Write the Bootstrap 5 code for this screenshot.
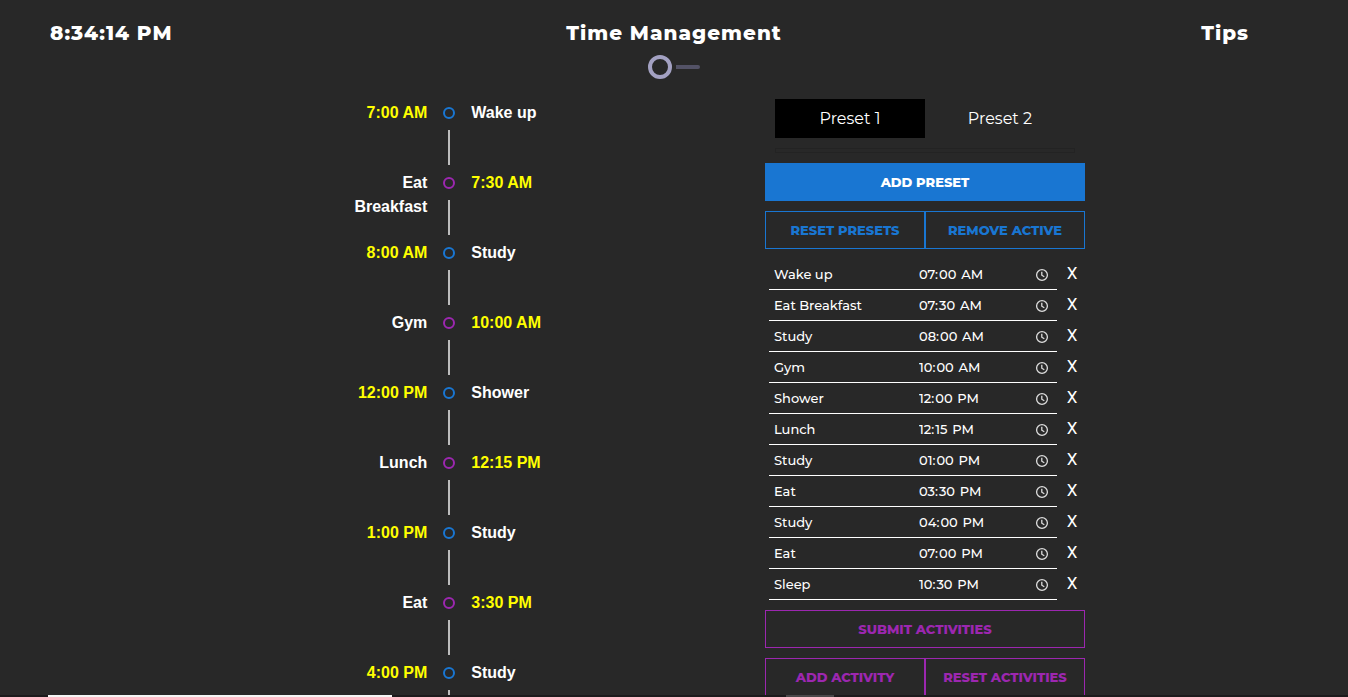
<!DOCTYPE html>
<html lang="en">
<head>
<meta charset="utf-8">
<meta name="viewport" content="width=device-width, initial-scale=1">
<title>Time Management</title>
<link href="https://cdn.jsdelivr.net/npm/bootstrap@5.3.0/dist/css/bootstrap.min.css" rel="stylesheet">
<style>
  :root { --blue: #1976d2; --violet: #9c27b0; }
  body { background: #282828; color: #fff; font-family: Montserrat, Inter, sans-serif; }
  .topbar { display: grid; grid-template-columns: 1fr auto 1fr; padding-top: 18px; font-size: 20px; line-height: 30px; font-weight: 800; letter-spacing: 1px; }
  .topbar h1 { font: inherit; }
  .clock { padding-left: 50px; }
  .tips { padding-right: 99px; }
  .mode { appearance: none; display: flex; align-items: center; gap: 4px; margin: 7px 0 0; cursor: pointer; }
  .mode::before { content: ""; width: 24px; height: 24px; border: 4px solid #a3a1c2; border-radius: 50%; }
  .mode::after { content: ""; width: 24px; height: 4px; background: #535266; border-radius: 0 2px 2px 0; }

  .timeline { width: 224px; padding-top: 16px; font: 700 16px/24px "Liberation Sans", Arial, sans-serif; }
  .moment { min-height: 70px; }
  .moment > span { flex: 1 1 0; padding: 6px 5px 5px; }
  .moment time { color: #ff0; }
  .track { margin: 12px 11px 0; }
  .dot { width: 12px; height: 12px; border: 2px solid var(--blue); border-radius: 50%; margin-bottom: 11px; }
  .moment:nth-child(even) .dot { border-color: var(--violet); }
  .stem { width: 2px; background: #bdbdbd; }

  .panel { width: 320px; margin-left: 91px; padding-top: 20px; }
  .tabs { padding: 0 10px; }
  .tabs .btn { border: 0; height: 39px; padding: 0; color: #fff; font-size: 16px; line-height: 24px; }
  .tabs .btn.active { background: #000; }
  .divider { height: 5px; margin: 10px; border: 1px solid #232323; }
  .panel .action { --bs-btn-font-weight: 800; --bs-btn-font-size: 13px; --bs-btn-line-height: 20px; --bs-btn-padding-y: 8px; --bs-btn-padding-x: 0; border-radius: 0; }
  .solid { background: var(--blue); border-color: var(--blue); color: #fff; }
  .blue { border-color: var(--blue); color: var(--blue); }
  .violet { border-color: var(--violet); color: var(--violet); }
  .pair { margin-top: 10px; }
  .activities { padding: 10px 0 10px 4px; }
  .activity { height: 31px; }
  .activity input { flex: none; width: 144px; height: 31px; border: 0; border-bottom: 1px solid #fff; border-radius: 0; padding: 0 5px; background: none; color: #fff; font-size: 13px; font-weight: 500; color-scheme: dark; outline: 0; }
  .activity input[type=time] { padding: 1px 8px 0 6px; }
  .activity input::-webkit-datetime-edit { padding: 0; }
  .activity input::-webkit-datetime-edit-ampm-field { padding-left: 2px; }
  .activity input::-webkit-calendar-picker-indicator { width: 14px; height: 14px; padding: 0; background: url("data:image/svg+xml,%3Csvg xmlns='http://www.w3.org/2000/svg' viewBox='0 0 14 14' fill='none' stroke='%23ddd' stroke-width='1.3'%3E%3Ccircle cx='7' cy='7' r='5.4'/%3E%3Cpath d='M6.8 3.8v3.4l2.5 1.6'/%3E%3C/svg%3E") center / 14px no-repeat; }
  .drop { border: 0; background: none; color: #fff; padding: 0 0 4px 2px; width: 28px; font: 17px/24px Roboto, sans-serif; }

  .dock { position: fixed; inset: auto 0 0 0; height: 2px; background: #1c1a1c; padding-left: 48px; }
  .dock-search { width: 344px; background: #f5f5f5; }
  .dock-app { width: 48px; margin-left: 394px; background: #4a484a; }
</style>
</head>
<body class="vh-100 overflow-hidden">
<header class="topbar">
  <div class="clock">8:34:14 PM</div>
  <div class="d-flex flex-column align-items-center">
    <h1 class="m-0">Time Management</h1>
    <input class="mode" type="checkbox" role="switch" aria-label="Toggle mode">
  </div>
  <a class="tips text-end text-white text-decoration-none" href="#">Tips</a>
</header>

<main class="row g-0">
  <section class="col-4 offset-2 d-flex justify-content-center" aria-label="Schedule">
    <div class="timeline" id="timeline"></div>
  </section>
  <section class="col-6" aria-label="Presets">
    <div class="panel">
      <div class="tabs d-flex">
        <button class="btn rounded-0 w-50 active" type="button">Preset 1</button>
        <button class="btn rounded-0 w-50" type="button">Preset 2</button>
      </div>
      <div class="divider"></div>
      <button class="btn action solid w-100" type="button">ADD PRESET</button>
      <div class="pair d-flex">
        <button class="btn action blue w-50" type="button">RESET PRESETS</button>
        <button class="btn action blue w-50" type="button">REMOVE ACTIVE</button>
      </div>
      <form class="activities" id="activities"></form>
      <button class="btn action violet w-100" type="button">SUBMIT ACTIVITIES</button>
      <div class="pair d-flex">
        <button class="btn action violet w-50" type="button">ADD ACTIVITY</button>
        <button class="btn action violet w-50" type="button">RESET ACTIVITIES</button>
      </div>
    </div>
  </section>
</main>

<div class="dock d-flex" aria-hidden="true"><div class="dock-search"></div><div class="dock-app"></div></div>

<script src="https://cdn.jsdelivr.net/npm/bootstrap@5.3.0/dist/js/bootstrap.bundle.min.js"></script>
<script>
  const plan = [
    ["Wake up", "07:00"], ["Eat Breakfast", "07:30"], ["Study", "08:00"], ["Gym", "10:00"],
    ["Shower", "12:00"], ["Lunch", "12:15"], ["Study", "13:00"], ["Eat", "15:30"],
    ["Study", "16:00"], ["Eat", "19:00"], ["Sleep", "22:30"]
  ];
  const label = t => {
    const [h, m] = t.split(":");
    return `${h % 12 || 12}:${m} ${h < 12 ? "AM" : "PM"}`;
  };
  document.getElementById("timeline").innerHTML = plan.map(([name, t], i) => {
    const time = `<time datetime="${t}">${label(t)}</time>`;
    const [left, right] = i % 2 ? [name, time] : [time, name];
    return `<div class="moment d-flex"><span class="text-end">${left}</span>
      <div class="track d-flex flex-column align-items-center"><div class="dot"></div><div class="stem flex-fill"></div></div>
      <span>${right}</span></div>`;
  }).join("");
  document.getElementById("activities").innerHTML = plan.map(([name, t]) =>
    `<div class="activity d-flex"><input type="text" value="${name}" aria-label="Activity"><input type="time" value="${t}" aria-label="${name} time"><button class="drop" type="button" aria-label="Remove ${name}">X</button></div>`
  ).join("");
</script>
</body>
</html>
